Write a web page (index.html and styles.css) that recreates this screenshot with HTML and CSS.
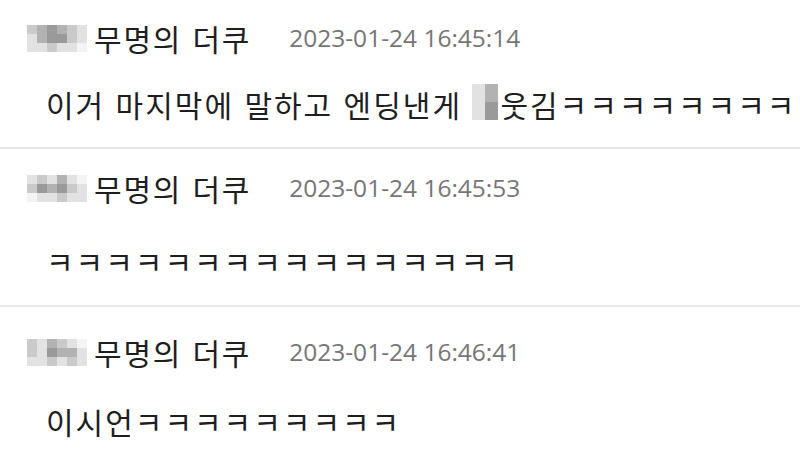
FILE: index.html
```html
<!DOCTYPE html>
<html lang="ko">
<head>
    <meta charset="UTF-8">
    <meta name="viewport" content="width=device-width, initial-scale=1.0">
    <title>댓글</title>
    <link rel="stylesheet" href="styles.css">
</head>
<body>
    <ul class="comments">
        <li class="comment first">
            <div class="meta">
                <span class="blur blur-wide">
                    <i class="m2"></i><i class="m3"></i><i class="m4"></i><i class="m3"></i><i class="m2"></i><i class="m1"></i>
                    <i class="m1"></i><i class="m3"></i><i class="m4"></i><i class="m4"></i><i class="m2"></i><i class="m1"></i>
                    <i class="m1"></i><i class="m1"></i><i class="m2"></i><i class="m1"></i><i class="m1"></i><i class="m0"></i>
                </span>
                <span class="name">무명의 더쿠</span>
                <span class="date">2023-01-24 16:45:14</span>
            </div>
            <p class="text">이거 마지막에 말하고 엔딩낸게 <span class="blur blur-inline"><i class="m1"></i><i class="m3"></i><i class="m1"></i><i class="m4"></i></span>웃김ㅋㅋㅋㅋㅋㅋㅋㅋㅋ</p>
        </li>
        <li class="comment second">
            <div class="meta">
                <span class="blur blur-wide">
                    <i class="m1"></i><i class="m2"></i><i class="m1"></i><i class="m3"></i><i class="m1"></i><i class="m0"></i>
                    <i class="m2"></i><i class="m4"></i><i class="m3"></i><i class="m4"></i><i class="m2"></i><i class="m1"></i>
                    <i class="m0"></i><i class="m1"></i><i class="m1"></i><i class="m2"></i><i class="m1"></i><i class="m1"></i>
                </span>
                <span class="name">무명의 더쿠</span>
                <span class="date">2023-01-24 16:45:53</span>
            </div>
            <p class="text">ㅋㅋㅋㅋㅋㅋㅋㅋㅋㅋㅋㅋㅋㅋㅋㅋ</p>
        </li>
        <li class="comment third">
            <div class="meta">
                <span class="blur blur-wide">
                    <i class="m2"></i><i class="m1"></i><i class="m3"></i><i class="m2"></i><i class="m1"></i><i class="m0"></i>
                    <i class="m2"></i><i class="m1"></i><i class="m4"></i><i class="m3"></i><i class="m3"></i><i class="m1"></i>
                    <i class="m1"></i><i class="m1"></i><i class="m2"></i><i class="m1"></i><i class="m2"></i><i class="m1"></i>
                </span>
                <span class="name">무명의 더쿠</span>
                <span class="date">2023-01-24 16:46:41</span>
            </div>
            <p class="text">이시언ㅋㅋㅋㅋㅋㅋㅋㅋㅋ</p>
        </li>
    </ul>
</body>
</html>
```

FILE: styles.css
```css
body {
    margin: 0;
    padding: 0;
    background: #fff;
    font-family: "Noto Sans CJK KR", "Noto Sans", sans-serif;
    color: #222;
    overflow: hidden;
}
.comments {
    list-style: none;
    margin: 0;
    padding: 0;
}
.comment {
    border-bottom: 2px solid #e6e6e6;
    padding: 20px 0 23px 0;
}
.comment.first {
    padding-top: 18px;
}
.comment.second {
    padding-top: 19px;
    padding-bottom: 24px;
}
.comment.second .text {
    margin-top: 33px;
}
.comment.third {
    padding-top: 25px;
    border-bottom: none;
}
.comment.third .text {
    margin-top: 29px;
}
.meta {
    display: flex;
    align-items: center;
    height: 40px;
    padding-left: 27px;
}
.name {
    font-size: 30px;
    line-height: 40px;
    letter-spacing: 1.8px;
    margin-left: 9px;
    color: #1e1e1e;
}
.date {
    font-family: "Open Sans", "Liberation Sans", sans-serif;
    font-size: 24.5px;
    line-height: 40px;
    color: #767676;
    margin-left: 38px;
}
.text {
    margin: 26px 0 0 0;
    padding-left: 46px;
    font-size: 30px;
    line-height: 40px;
    letter-spacing: 2px;
    white-space: nowrap;
    color: #1e1e1e;
}

/* mosaic used to hide nicknames */
.blur {
    display: inline-grid;
}
.blur-wide {
    grid-template-columns: repeat(6, 10px);
    grid-template-rows: repeat(3, 9px);
    width: 58px;
}
.blur-inline {
    grid-template-columns: repeat(2, 13px);
    grid-template-rows: repeat(2, 18px);
    vertical-align: top;
    margin-right: 2px;
}
.blur i {
    display: block;
}
.m0 { background: #f4f4f4; }
.m1 { background: #e2e2e2; }
.m2 { background: #cacaca; }
.m3 { background: #b2b2b2; }
.m4 { background: #9a9a9a; }
```
